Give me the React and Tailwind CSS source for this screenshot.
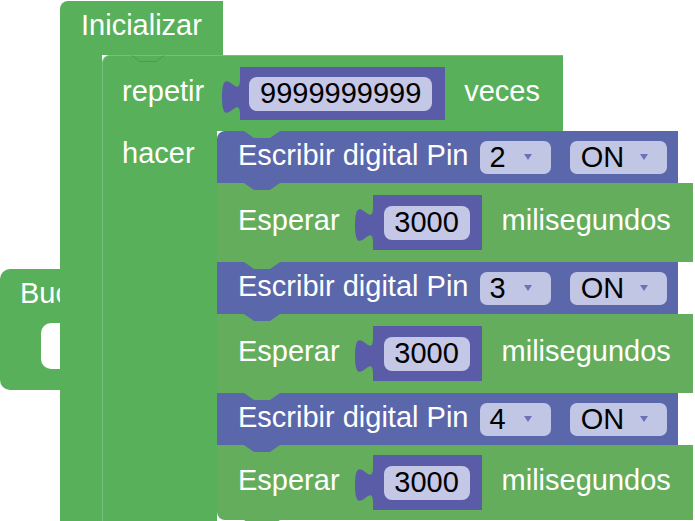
import React from "react";

// colours of the block categories
// control: #59b05b, wait: #64ad5c, io: #5b67ab, number: #5b5ca8, field: #c5c7e6

function Tab({ className }) {
  // the little "next statement" tab hanging under a block
  return (
    <div
      className={`absolute left-[27px] top-full z-10 h-[7px] w-[36px] [clip-path:polygon(0_0,100%_0,72%_100%,28%_100%)] ${className}`}
    />
  );
}

function OutputTab({ fill }) {
  return (
    <svg
      className="absolute left-[-18px] top-[12px] h-[36px] w-[18px]"
      viewBox="-8 5 8 15"
      preserveAspectRatio="none"
    >
      <path d="M0,5 c0,10 -8,-8 -8,7.5 s8,-2.5 8,7.5 Z" fill={fill} />
    </svg>
  );
}

function NumberBlock({ value, big }) {
  return big ? (
    <div className="relative ml-[36px] flex h-[53px] items-center bg-[#5b5ca8] pl-[9px] pr-[13px]">
      <OutputTab fill="#5b5ca8" />
      <div className="flex h-[34px] w-[183px] items-center justify-center rounded-[8px] bg-[#c5c7e6] text-black">
        {value}
      </div>
    </div>
  ) : (
    <div className="relative ml-[33px] flex h-[55px] items-center bg-[#5b5ca8] pl-[11px] pr-[12px]">
      <OutputTab fill="#5b5ca8" />
      <div className="flex h-[34px] w-[86px] items-center justify-center rounded-[8px] bg-[#c5c7e6] text-black">
        {value}
      </div>
    </div>
  );
}

function Dropdown({ label, wide }) {
  return (
    <div
      className={`flex h-[33px] items-center rounded-[7px] bg-[#c2c6e5] text-black ${
        wide ? "pl-[11px] pr-[19px]" : "pl-[9px] pr-[19px]"
      }`}
    >
      <span>{label}</span>
      <svg className={`h-[6px] w-[8px] ${wide ? "ml-[16px]" : "ml-[18px]"}`} viewBox="0 0 8 6">
        <polygon points="0,0 8,0 4,6" fill="#6a73b6" />
      </svg>
    </div>
  );
}

function WriteBlock({ pin, first }) {
  return (
    <div
      className={`relative flex h-[52px] w-[461px] items-center bg-[#5b67ab] pl-[21px] ${
        first ? "rounded-tl-[8px]" : ""
      }`}
    >
      {first && (
        <div className="absolute left-[27px] top-0 h-[7px] w-[36px] bg-[#59b05b] [clip-path:polygon(0_0,100%_0,72%_100%,28%_100%)]" />
      )}
      <span className="pb-[4px]">Escribir digital Pin</span>
      <div className="ml-[12px]">
        <Dropdown label={pin} />
      </div>
      <div className="ml-[19px]">
        <Dropdown label="ON" wide />
      </div>
      <Tab className="bg-[#5b67ab]" />
    </div>
  );
}

function WaitBlock({ last }) {
  return (
    <div
      className={`relative flex w-[476px] items-center bg-[#64ad5c] pl-[21px] ${
        last ? "h-[75px] rounded-bl-[8px]" : "h-[79px]"
      }`}
    >
      <span className="pb-[4px]">Esperar</span>
      <NumberBlock value="3000" />
      <span className="ml-[20px] pb-[4px]">milisegundos</span>
      <Tab className="bg-[#64ad5c]" />
    </div>
  );
}

export default function App() {
  return (
    <div className="relative h-[521px] w-[695px] overflow-hidden bg-white font-['Liberation_Sans',Arial,sans-serif] text-[29px] leading-none text-white">
      {/* loop block lying behind, mostly hidden */}
      <div className="absolute left-0 top-[269px] h-[121px] w-[90px] rounded-l-[10px] bg-[#59b05b] pl-[20px] pt-[10px]">
        <span>Bucle</span>
        <div className="absolute left-[41px] top-[54px] h-[46px] w-[49px] rounded-l-[10px] bg-white" />
      </div>

      {/* setup block */}
      <div className="absolute left-[60px] top-[1px] flex flex-col">
        <div className="h-[54px] w-[163px] rounded-tl-[8px] bg-[#59b05b] pl-[21px] pt-[10px]">
          Inicializar
        </div>
        <div className="flex">
          <div className="h-[466px] w-[42px] bg-[#59b05b]" />

          {/* repeat block */}
          <div className="relative flex flex-col">
            <svg className="absolute left-[30px] top-0 z-10 h-[8px] w-[32px]" viewBox="0 0 32 8">
              <polyline points="0,0.5 8,6.5 24,6.5 32,0.5" fill="none" stroke="#4c9a4e" strokeWidth="1" />
            </svg>
            <div className="flex h-[76px] w-[461px] items-center rounded-tl-[8px] border-l border-t border-[#74c076] bg-[#59b05b] pl-[19px]">
              <span className="pb-[5px]">repetir</span>
              <NumberBlock value="9999999999" big />
              <span className="ml-[19px] pb-[5px]">veces</span>
            </div>
            <div className="flex">
              <div className="h-[391px] w-[115px] border-l border-[#74c076] bg-[#59b05b] pl-[19px] pt-[8px]">
                hacer
              </div>
              <div className="flex flex-col">
                <WriteBlock pin="2" first />
                <WaitBlock />
                <WriteBlock pin="3" />
                <WaitBlock />
                <WriteBlock pin="4" />
                <WaitBlock last />
              </div>
            </div>
          </div>
        </div>
      </div>
    </div>
  );
}
